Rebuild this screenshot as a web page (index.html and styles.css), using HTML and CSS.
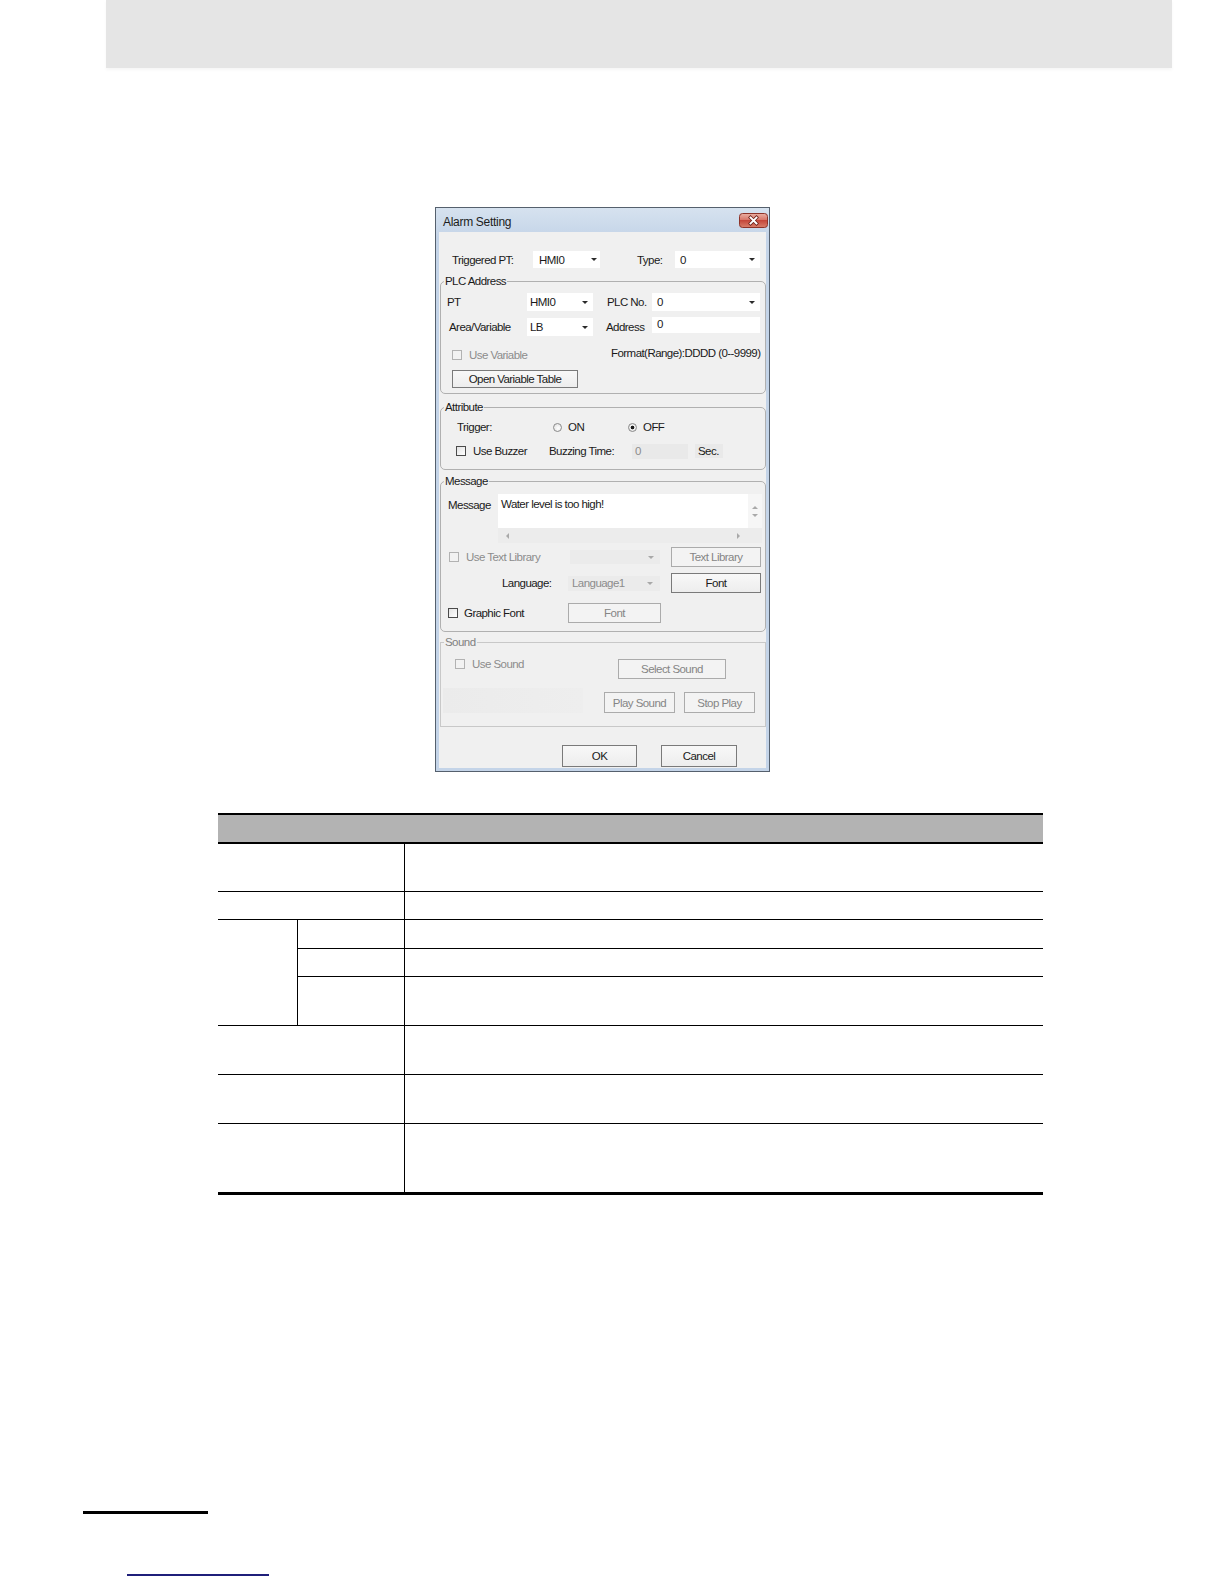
FILE: index.html
```html
<!DOCTYPE html>
<html>
<head>
<meta charset="utf-8">
<title>Alarm Setting</title>
<link rel="stylesheet" href="styles.css">
</head>
<body>
<div class="page-header"></div>

<div class="dialog">
  <div class="titlebar">
    <span class="title">Alarm Setting</span>
    <span class="close">
      <svg width="29" height="15" viewBox="0 0 29 15">
        <defs>
          <linearGradient id="cg" x1="0" y1="0" x2="0" y2="1">
            <stop offset="0" stop-color="#eab0a4"/>
            <stop offset="0.45" stop-color="#d8776a"/>
            <stop offset="0.5" stop-color="#c5473a"/>
            <stop offset="1" stop-color="#d9806c"/>
          </linearGradient>
        </defs>
        <rect x="0.5" y="0.5" width="28" height="14" rx="3" fill="url(#cg)" stroke="#8d3329"/>
        <path d="M11.5 4.5 L17.5 10.5 M17.5 4.5 L11.5 10.5" stroke="#6b2019" stroke-width="3.4" stroke-linecap="square"/>
        <path d="M11.5 4.5 L17.5 10.5 M17.5 4.5 L11.5 10.5" stroke="#ffffff" stroke-width="1.9" stroke-linecap="square"/>
      </svg>
    </span>
  </div>

  <div class="client">
    <div class="row r-trig">
      <span class="lbl l-trig">Triggered PT:</span>
      <span class="combo c-hmi">HMI0<i class="arr"></i></span>
      <span class="lbl l-type">Type:</span>
      <span class="combo c-type">0<i class="arr"></i></span>
    </div>

    <fieldset class="grp g-plc">
      <legend>PLC Address</legend>
      <div class="row plc-r1">
        <span class="lbl l-pt">PT</span>
        <span class="combo c-pt">HMI0<i class="arr"></i></span>
        <span class="lbl l-plcno">PLC No.</span>
        <span class="combo c-plcno">0<i class="arr"></i></span>
      </div>
      <div class="row plc-r2">
        <span class="lbl l-area">Area/Variable</span>
        <span class="combo c-pt">LB<i class="arr"></i></span>
        <span class="lbl l-addr">Address</span>
        <span class="edit e-addr">0</span>
      </div>
      <div class="row plc-r3">
        <span class="chk cg-var"><i class="cb dis"></i><span class="dim">Use Variable</span></span>
        <span class="lbl fmt">Format(Range):DDDD (0--9999)</span>
      </div>
      <div class="btn b-openvar">Open Variable Table</div>
    </fieldset>

    <fieldset class="grp g-attr">
      <legend>Attribute</legend>
      <div class="row at-r1">
        <span class="lbl l-trigger">Trigger:</span>
        <span class="rd-opt"><i class="rd"></i><span>ON</span></span>
        <span class="rd-opt"><i class="rd on"></i><span>OFF</span></span>
      </div>
      <div class="row at-r2">
        <span class="chk cg-buzz"><i class="cb"></i><span>Use Buzzer</span></span>
        <span class="lbl l-buzz">Buzzing Time:</span>
        <span class="edit e-buzz">0</span>
        <span class="sec">Sec.</span>
      </div>
    </fieldset>

    <fieldset class="grp g-msg">
      <legend>Message</legend>
      <div class="row ms-r1">
        <span class="lbl l-msg">Message</span>
        <div class="memo">
          <div class="memo-top">
            <div class="memo-text">Water level is too high!</div>
            <div class="vscroll"><i class="sa sa-up"></i><i class="sa sa-down"></i></div>
          </div>
          <div class="memo-bot">
            <div class="hscroll"><i class="sa sa-left"></i><i class="sa sa-right"></i></div>
            <div class="corner"></div>
          </div>
        </div>
      </div>
      <div class="row ms-r2">
        <span class="chk cg-tl"><i class="cb dis"></i><span class="dim">Use Text Library</span></span>
        <span class="combo dis c-tl"><span></span><i class="arr"></i></span>
        <div class="btn dis b-tl">Text Library</div>
      </div>
      <div class="row ms-r3">
        <span class="lbl l-lang">Language:</span>
        <span class="combo dis c-lang">Language1<i class="arr"></i></span>
        <div class="btn b-font1">Font</div>
      </div>
      <div class="row ms-r4">
        <span class="chk cg-gf"><i class="cb"></i><span>Graphic Font</span></span>
        <div class="btn dis b-font2">Font</div>
      </div>
    </fieldset>

    <fieldset class="grp g-snd">
      <legend>Sound</legend>
      <div class="row sn-r1">
        <span class="chk cg-snd"><i class="cb dis"></i><span class="dim">Use Sound</span></span>
        <div class="btn dis b-sel">Select Sound</div>
      </div>
      <div class="row sn-r2">
        <div class="shade"></div>
        <div class="btn dis b-play">Play Sound</div>
        <div class="btn dis b-stop">Stop Play</div>
      </div>
    </fieldset>

    <div class="row dlg-btns">
      <div class="btn b-ok">OK</div>
      <div class="btn b-cancel">Cancel</div>
    </div>
  </div>
</div>

<div class="spec">
  <div class="hd"></div>
  <div class="c12"></div><div class="c3"></div>
  <div class="c12"></div><div class="c3"></div>
  <div class="gl"></div><div class="sub"></div><div class="c3"></div>
  <div class="sub"></div><div class="c3"></div>
  <div class="sub"></div><div class="c3"></div>
  <div class="c12"></div><div class="c3"></div>
  <div class="c12"></div><div class="c3"></div>
  <div class="c12 last"></div><div class="c3 last"></div>
</div>

<div class="foot-rule"></div>
<div class="foot-link"></div>
</body>
</html>
```

FILE: styles.css
```css
* { box-sizing: border-box; }
html, body { margin: 0; padding: 0; background: #ffffff; }
body {
  width: 1224px;
  min-height: 1584px;
  font-family: "Liberation Sans", Arial, sans-serif;
  overflow: hidden;
}

.page-header {
  margin-left: 106px;
  width: 1066px;
  height: 68px;
  background: #e5e5e5;
  box-shadow: 0 2px 3px rgba(0, 0, 0, 0.04);
}

/* ---------- dialog frame ---------- */
.dialog {
  margin: 139px 0 0 435px;
  width: 335px;
  height: 565px;
  border: 1px solid #55606d;
  background: linear-gradient(#d6e2ef, #c4d4e8 30px, #c4d4e8);
  padding: 0 3px 3px;
  display: flex;
  flex-direction: column;
}
.titlebar {
  flex: none;
  height: 24px;
  display: flex;
  justify-content: space-between;
  align-items: flex-start;
}
.title {
  padding: 7px 0 0 4px;
  font-size: 12px;
  line-height: 14px;
  letter-spacing: -0.3px;
  color: #1c1c1c;
}
.close { display: block; margin: 5px -2px 0 0; }
.close svg { display: block; }

.client {
  flex: 1;
  background: #f0f0f0;
  font-family: "Liberation Sans", Arial, sans-serif;
  font-size: 11.5px;
  letter-spacing: -0.55px;
  line-height: 14px;
  color: #1a1a1a;
}

/* ---------- generic controls ---------- */
.row { display: flex; align-items: center; }
.lbl { flex: none; white-space: nowrap; }
.dim { color: #8c8c8c; }

.combo {
  flex: none;
  display: flex;
  align-items: center;
  justify-content: space-between;
  background: #ffffff;
  height: 100%;
  white-space: nowrap;
}
.combo.dis { background: #ebebeb; color: #8c8c8c; }
.arr {
  display: block;
  width: 0;
  height: 0;
  border-left: 3px solid transparent;
  border-right: 3px solid transparent;
  border-top: 3px solid #2a2a2a;
}
.combo.dis .arr { border-top-color: #a8a8a8; }

.edit {
  flex: none;
  background: #ffffff;
  white-space: nowrap;
}

.chk { display: flex; align-items: center; flex: none; white-space: nowrap; }
.cb {
  display: block;
  flex: none;
  width: 10px;
  height: 10px;
  border: 1px solid #4a4a4a;
  background: linear-gradient(135deg, #e2e2e2, #ffffff);
}
.cb.dis { border-color: #b2b2b2; background: #f2f2f2; }

.rd {
  display: block;
  flex: none;
  width: 9px;
  height: 9px;
  border-radius: 50%;
  border: 1px solid #8a8a8a;
  background: radial-gradient(circle at 60% 60%, #ffffff, #dcdcdc);
}
.rd.on {
  background: radial-gradient(circle, #1a1a1a 0, #1a1a1a 1.5px, #f2f2f2 2.2px, #dcdcdc 100%);
}

.btn {
  flex: none;
  display: flex;
  align-items: center;
  justify-content: center;
  border: 1px solid #7a7a7a;
  background: linear-gradient(#f8f8f8, #ededed);
  color: #1a1a1a;
  white-space: nowrap;
}
.btn.dis { border-color: #ababab; color: #858585; background: #f3f3f3; }

/* ---------- group boxes ---------- */
.grp {
  margin: 0 0 0 1px;
  width: 326px;
  min-width: 0;
  padding: 0;
  border: 1px solid #b0b0b0;
  border-radius: 5px;
}
.grp legend {
  margin-left: 3px;
  padding: 0 1px;
  line-height: 14px;
}

/* top row */
.r-trig { margin-top: 19px; height: 17px; }
.l-trig { width: 94px; padding-left: 13px; }
.c-hmi { width: 67px; padding: 0 3px 0 6px; }
.l-type { margin-left: 37px; width: 38px; }
.c-type { width: 85px; padding: 0 5px; }

/* PLC address */
.g-plc { margin-top: 6px; padding-bottom: 5px; }
.plc-r1 { margin-top: 5px; height: 18px; }
.l-pt { width: 86px; padding-left: 6px; }
.c-pt { width: 66px; padding: 0 5px 0 3px; }
.l-plcno { margin-left: 14px; width: 45px; }
.c-plcno { width: 108px; padding: 0 5px; }
.plc-r2 { margin-top: 7px; height: 18px; }
.l-area { width: 86px; padding-left: 8px; }
.l-addr { margin-left: 13px; width: 46px; }
.e-addr {
  width: 108px;
  height: 16px;
  padding-left: 5px;
  align-self: flex-start;
  margin-top: -1px;
  line-height: 15px;
}
.plc-r3 { margin-top: 10px; height: 14px; }
.cg-var { width: 170px; padding-left: 11px; gap: 7px; margin-top: 4px; }
.b-openvar { margin: 10px 0 0 11px; width: 126px; height: 18px; }

/* Attribute */
.g-attr { margin-top: 6px; padding-bottom: 10px; }
.at-r1 { margin-top: 5px; height: 16px; }
.l-trigger { width: 112px; padding-left: 16px; }
.rd-opt { display: flex; align-items: center; gap: 6px; width: 75px; flex: none; }
.at-r2 { margin-top: 8px; height: 16px; }
.cg-buzz { width: 108px; padding-left: 15px; gap: 7px; }
.l-buzz { width: 83px; }
.e-buzz {
  width: 56px;
  height: 15px;
  background: #e9e9e9;
  color: #8c8c8c;
  padding-left: 3px;
}
.sec {
  flex: none;
  margin-left: 7px;
  width: 28px;
  height: 14px;
  padding-left: 3px;
  background: #e9e9e9;
}

/* Message */
.g-msg { margin-top: 4px; padding-bottom: 8px; }
.ms-r1 { margin-top: 6px; height: 49px; align-items: flex-start; }
.l-msg { width: 57px; padding-left: 7px; margin-top: 4px; }
.memo { width: 264px; height: 49px; display: flex; flex-direction: column; flex: none; }
.memo-top { flex: 1; display: flex; }
.memo-text { flex: 1; background: #ffffff; padding: 3px 0 0 3px; white-space: nowrap; }
.vscroll {
  width: 14px;
  background: #f6f6f6;
  display: flex;
  flex-direction: column;
  align-items: center;
  justify-content: center;
  gap: 5px;
}
.memo-bot { height: 15px; display: flex; }
.hscroll {
  flex: 1;
  background: #ececec;
  display: flex;
  align-items: center;
  justify-content: space-between;
  padding: 0 8px;
}
.corner { width: 14px; background: #ececec; }
.sa { display: block; width: 0; height: 0; }
.sa-up { border-left: 3px solid transparent; border-right: 3px solid transparent; border-bottom: 3px solid #a9a9a9; }
.sa-down { border-left: 3px solid transparent; border-right: 3px solid transparent; border-top: 3px solid #a9a9a9; }
.sa-left { border-top: 3px solid transparent; border-bottom: 3px solid transparent; border-right: 3px solid #a9a9a9; }
.sa-right { border-top: 3px solid transparent; border-bottom: 3px solid transparent; border-left: 3px solid #a9a9a9; }

.ms-r2 { margin-top: 4px; height: 20px; }
.cg-tl { width: 129px; padding-left: 8px; gap: 7px; }
.c-tl { width: 90px; height: 14px; padding: 0 6px 0 4px; }
.b-tl { margin-left: 11px; width: 90px; height: 20px; }
.ms-r3 { margin-top: 6px; height: 20px; }
.l-lang { width: 127px; padding-left: 61px; }
.c-lang { width: 92px; height: 15px; padding: 0 7px 0 4px; }
.b-font1 { margin-left: 11px; width: 90px; height: 20px; }
.ms-r4 { margin-top: 10px; height: 20px; }
.cg-gf { width: 127px; padding-left: 7px; gap: 6px; }
.b-font2 { width: 93px; height: 20px; }

/* Sound */
.grp.g-snd {
  margin-top: 3px;
  padding-bottom: 13px;
  border-radius: 0;
  border-color: #c8c8c8;
}
.g-snd legend { color: #808080; }
.sn-r1 { margin-top: 10px; height: 20px; }
.cg-snd { width: 177px; padding-left: 14px; gap: 7px; align-self: flex-start; margin-top: -2px; }
.b-sel { width: 108px; height: 20px; }
.sn-r2 { margin-top: 9px; height: 25px; align-items: flex-start; }
.shade {
  flex: none;
  margin-left: 2px;
  width: 140px;
  height: 25px;
  background: linear-gradient(to right, #ebebeb, #eeeeee);
}
.b-play { margin: 4px 0 0 21px; width: 71px; height: 21px; }
.b-stop { margin: 4px 0 0 9px; width: 71px; height: 21px; }

/* dialog buttons */
.dlg-btns { margin-top: 18px; height: 22px; }
.b-ok { margin-left: 123px; width: 75px; height: 22px; }
.b-cancel { margin-left: 24px; width: 76px; height: 22px; }

/* ---------- spec table ---------- */
.spec {
  margin: 41px 0 0 218px;
  width: 825px;
  display: grid;
  grid-template-columns: 79px 107px 639px;
  grid-template-rows: 29px 48px 28px 29px 28px 49px 49px 49px 68px;
  border-top: 2px solid #000000;
  border-bottom: 3px solid #000000;
}
.spec > div { border-bottom: 1px solid #000000; }
.spec > .hd { grid-column: 1 / 4; background: #b3b3b3; border-bottom-width: 2px; }
.spec > .c12 { grid-column: 1 / 3; }
.spec > .c3 { border-left: 1px solid #000000; }
.spec > .gl { grid-row: span 3; }
.spec > .sub { border-left: 1px solid #000000; }
.spec > .last { border-bottom: 0; }

/* ---------- footer ---------- */
.foot-rule {
  margin: 316px 0 0 83px;
  width: 125px;
  height: 3px;
  background: #000000;
}
.foot-link {
  margin: 60px 0 0 127px;
  width: 142px;
  height: 2px;
  background: #1f1f7a;
}
```
